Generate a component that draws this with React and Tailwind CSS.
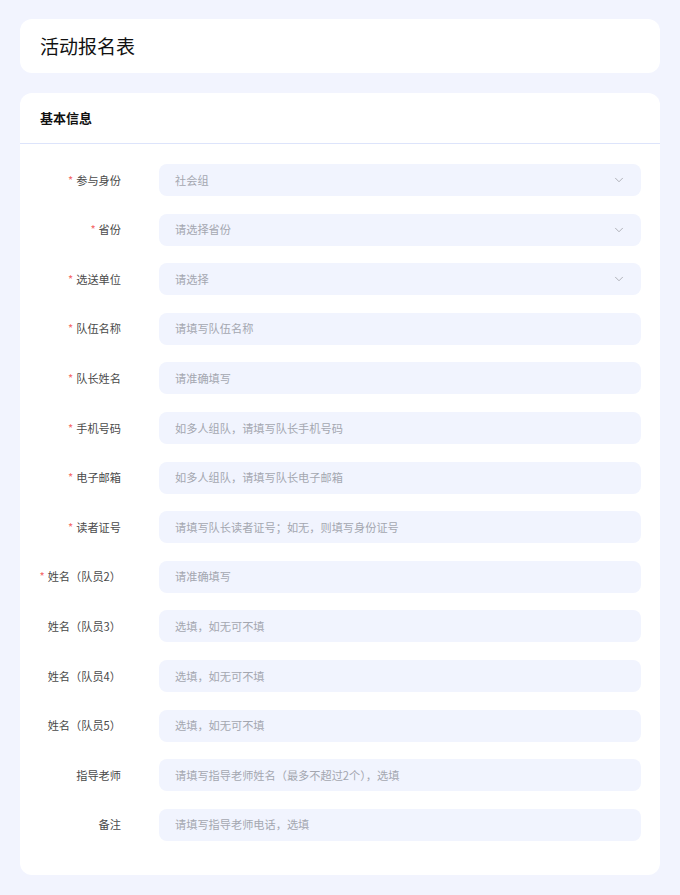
import React from 'react';
import { ChevronDown } from 'lucide-react';

const fields = [
  { label: '参与身份', required: true, value: '社会组', select: true },
  { label: '省份', required: true, placeholder: '请选择省份', select: true },
  { label: '选送单位', required: true, placeholder: '请选择', select: true },
  { label: '队伍名称', required: true, placeholder: '请填写队伍名称' },
  { label: '队长姓名', required: true, placeholder: '请准确填写' },
  { label: '手机号码', required: true, placeholder: '如多人组队，请填写队长手机号码' },
  { label: '电子邮箱', required: true, placeholder: '如多人组队，请填写队长电子邮箱' },
  { label: '读者证号', required: true, placeholder: '请填写队长读者证号；如无，则填写身份证号' },
  { label: '姓名（队员2）', required: true, placeholder: '请准确填写' },
  { label: '姓名（队员3）', placeholder: '选填，如无可不填' },
  { label: '姓名（队员4）', placeholder: '选填，如无可不填' },
  { label: '姓名（队员5）', placeholder: '选填，如无可不填' },
  { label: '指导老师', placeholder: '请填写指导老师姓名（最多不超过2个），选填' },
  { label: '备注', placeholder: '请填写指导老师电话，选填' },
];

export default function App() {
  return (
    <div
      className="min-h-[895px] bg-[#f2f4fe] px-5 pt-[19px] pb-5"
      style={{ fontFamily: '"Noto Sans CJK SC", "Noto Sans", sans-serif' }}
    >
      {/* Title */}
      <div className="h-[54px] bg-white rounded-xl flex items-center px-5">
        <h1 className="text-[19px] text-[#111] font-normal">活动报名表</h1>
      </div>

      {/* Form card */}
      <div className="mt-5 bg-white rounded-xl">
        <div className="h-[51px] flex items-center px-5 border-b border-[#dde4fb]">
          <h2 className="text-[13px] font-bold text-[#111]">基本信息</h2>
        </div>

        <div className="pt-5 pb-[34px] pr-[19px] flex flex-col gap-[17.6px]">
          {fields.map((f, i) => (
            <div key={i} className="flex items-center h-[32px]">
              <label className="w-[101px] shrink-0 text-right text-[11.2px] text-[#4a4a4a]">
                {f.required && <span className="text-[#f56c6c] mr-[3px]">*</span>}
                {f.label}
              </label>
              <div className="ml-[38px] flex-1 h-[32px] bg-[#f1f4fe] rounded-lg flex items-center pl-4 pr-[15px]">
                <span className="flex-1 text-[11.2px] text-[#a4a7b0] truncate">
                  {f.value || f.placeholder}
                </span>
                {f.select && <ChevronDown size={14} strokeWidth={1.3} className="text-[#9a9ca3]" />}
              </div>
            </div>
          ))}
        </div>
      </div>
    </div>
  );
}
